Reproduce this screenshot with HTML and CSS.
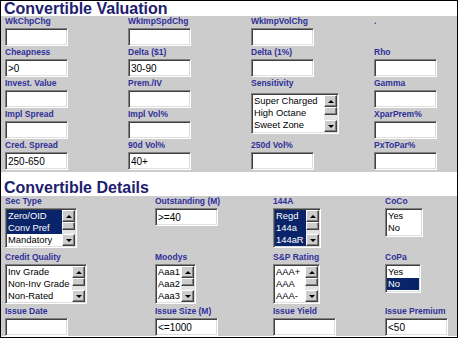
FILE: index.html
```html
<!DOCTYPE html>
<html lang="en">
<head>
  <meta charset="UTF-8">
  <title>Convertible Screen</title>
  <link rel="stylesheet" href="styles.css">
</head>
<body>
  <div class="frame">
    <h2 class="section-title top">Convertible Valuation</h2>
    <div class="panel val">
      <div class="cell"><span class="lbl">WkChpChg</span><input class="field" type="text" value=""></div>
      <div class="cell"><span class="lbl">WkImpSpdChg</span><input class="field" type="text" value=""></div>
      <div class="cell"><span class="lbl">WkImpVolChg</span><input class="field" type="text" value=""></div>
      <div class="cell"><span class="lbl">.</span></div>

      <div class="cell"><span class="lbl">Cheapness</span><input class="field" type="text" value="&gt;0"></div>
      <div class="cell"><span class="lbl">Delta ($1)</span><input class="field" type="text" value="30-90"></div>
      <div class="cell"><span class="lbl">Delta (1%)</span><input class="field" type="text" value=""></div>
      <div class="cell"><span class="lbl">Rho</span><input class="field" type="text" value=""></div>

      <div class="cell"><span class="lbl">Invest. Value</span><input class="field" type="text" value=""></div>
      <div class="cell"><span class="lbl">Prem./IV</span><input class="field" type="text" value=""></div>
      <div class="cell span2">
        <span class="lbl">Sensitivity</span>
        <div class="listbox sens">
          <div class="opts">
            <div class="opt">Super Charged</div>
            <div class="opt">High Octane</div>
            <div class="opt">Sweet Zone</div>
          </div>
          <div class="scroll"><div class="sb-btn up"></div><div class="sb-btn thumb"></div><div class="track"></div><div class="sb-btn down"></div></div>
        </div>
      </div>
      <div class="cell"><span class="lbl">Gamma</span><input class="field" type="text" value=""></div>

      <div class="cell"><span class="lbl">Impl Spread</span><input class="field" type="text" value=""></div>
      <div class="cell"><span class="lbl">Impl Vol%</span><input class="field" type="text" value=""></div>
      <div class="cell"><span class="lbl">XparPrem%</span><input class="field" type="text" value=""></div>

      <div class="cell"><span class="lbl">Cred. Spread</span><input class="field" type="text" value="250-650"></div>
      <div class="cell"><span class="lbl">90d Vol%</span><input class="field" type="text" value="40+"></div>
      <div class="cell"><span class="lbl">250d Vol%</span><input class="field" type="text" value=""></div>
      <div class="cell"><span class="lbl">PxToPar%</span><input class="field" type="text" value=""></div>
    </div>

    <h2 class="section-title second">Convertible Details</h2>
    <div class="panel det">
      <div class="cell">
        <span class="lbl">Sec Type</span>
        <div class="listbox sectype">
          <div class="opts">
            <div class="opt sel">Zero/OID</div>
            <div class="opt sel">Conv Pref</div>
            <div class="opt">Mandatory</div>
          </div>
          <div class="scroll"><div class="sb-btn up"></div><div class="sb-btn thumb"></div><div class="track"></div><div class="sb-btn down"></div></div>
        </div>
      </div>
      <div class="cell"><span class="lbl">Outstanding (M)</span><input class="field" type="text" value="&gt;=40"></div>
      <div class="cell">
        <span class="lbl">144A</span>
        <div class="listbox rule144">
          <div class="opts">
            <div class="opt sel">Regd</div>
            <div class="opt sel">144a</div>
            <div class="opt sel">144aR</div>
          </div>
          <div class="scroll"><div class="sb-btn up"></div><div class="sb-btn thumb"></div><div class="track"></div><div class="sb-btn down"></div></div>
        </div>
      </div>
      <div class="cell">
        <span class="lbl">CoCo</span>
        <div class="listbox short coco">
          <div class="opts">
            <div class="opt">Yes</div>
            <div class="opt">No</div>
          </div>
        </div>
      </div>

      <div class="cell">
        <span class="lbl">Credit Quality</span>
        <div class="listbox credit">
          <div class="opts">
            <div class="opt">Inv Grade</div>
            <div class="opt">Non-Inv Grade</div>
            <div class="opt">Non-Rated</div>
          </div>
          <div class="scroll"><div class="sb-btn up"></div><div class="sb-btn thumb"></div><div class="track"></div><div class="sb-btn down"></div></div>
        </div>
      </div>
      <div class="cell">
        <span class="lbl">Moodys</span>
        <div class="listbox moodys">
          <div class="opts">
            <div class="opt">Aaa1</div>
            <div class="opt">Aaa2</div>
            <div class="opt">Aaa3</div>
          </div>
          <div class="scroll"><div class="sb-btn up"></div><div class="sb-btn thumb"></div><div class="track"></div><div class="sb-btn down"></div></div>
        </div>
      </div>
      <div class="cell">
        <span class="lbl">S&amp;P Rating</span>
        <div class="listbox sp">
          <div class="opts">
            <div class="opt">AAA+</div>
            <div class="opt">AAA</div>
            <div class="opt">AAA-</div>
          </div>
          <div class="scroll"><div class="sb-btn up"></div><div class="sb-btn thumb"></div><div class="track"></div><div class="sb-btn down"></div></div>
        </div>
      </div>
      <div class="cell">
        <span class="lbl">CoPa</span>
        <div class="listbox short copa">
          <div class="opts">
            <div class="opt">Yes</div>
            <div class="opt sel">No</div>
          </div>
        </div>
      </div>

      <div class="cell"><span class="lbl">Issue Date</span><input class="field" type="text" value=""></div>
      <div class="cell"><span class="lbl">Issue Size (M)</span><input class="field" type="text" value="&lt;=1000"></div>
      <div class="cell"><span class="lbl">Issue Yield</span><input class="field" type="text" value=""></div>
      <div class="cell"><span class="lbl">Issue Premium</span><input class="field" type="text" value="&lt;50"></div>
    </div>
  </div>
</body>
</html>
```

FILE: styles.css
```css
body {
  margin: 0;
  background: #fff;
  font-family: "Liberation Sans", Arial, sans-serif;
}

.frame {
  width: 458px;
  height: 338px;
  box-sizing: border-box;
  border: 1px solid #000;
  background: #fff;
  overflow: hidden;
}

.section-title {
  margin: 0;
  padding-left: 3px;
  font-size: 16px;
  line-height: 15px;
  font-weight: bold;
  color: #20206e;
}

.section-title.top {
  height: 15px;
}

.section-title.second {
  padding-top: 8px;
  padding-bottom: 1px;
}

.panel {
  background: #cccccc;
  padding-left: 4px;
  display: grid;
}

.val {
  grid-template-columns: 123px 123px 123px 1fr;
  grid-auto-rows: 31px;
  height: 156px;
  box-sizing: border-box;
}

.det {
  grid-template-columns: 150px 118px 112px 1fr;
  grid-template-rows: 56px 54px 30px;
}

.span2 {
  grid-row: span 2;
}

.lbl {
  display: block;
  height: 10px;
  line-height: 10px;
  margin-bottom: 2px;
  font-size: 8.5px;
  font-weight: bold;
  color: #30309a;
  white-space: nowrap;
}

.field {
  display: block;
  width: 63px;
  height: 18px;
  margin: 0;
  padding: 0 0 0 2px;
  box-sizing: border-box;
  background: #fff;
  border-top: 1px solid #808080;
  border-left: 1px solid #808080;
  border-right: 1px solid #fff;
  border-bottom: 1px solid #fff;
  box-shadow: inset 1px 1px 0 #404040, inset -1px -1px 0 #dedede;
  font-family: "Liberation Sans", Arial, sans-serif;
  font-size: 10px;
  color: #000;
  outline: none;
}

.listbox {
  display: flex;
  height: 40px;
  box-sizing: border-box;
  background: #fff;
  border-top: 1px solid #808080;
  border-left: 1px solid #808080;
  border-right: 1px solid #fff;
  border-bottom: 1px solid #fff;
  padding: 1px;
  box-shadow: inset 1px 1px 0 #404040, inset -1px -1px 0 #dedede;
}

.listbox.short {
  height: 29px;
}

.sens { width: 88px; height: 41px; margin-top: 5px; }
.sectype { width: 72px; }
.rule144 { width: 48px; }
.coco { width: 38px; }
.credit { width: 82px; }
.moodys { width: 41px; }
.sp { width: 47px; }
.copa { width: 36px; }

.opts {
  flex: 1;
  min-width: 0;
  overflow: hidden;
  font-size: 9.4px;
  line-height: 12px;
  color: #000;
}

.opt {
  padding-left: 1px;
  white-space: nowrap;
}

.opt.sel {
  background: #0a246a;
  color: #fff;
}

.scroll {
  width: 13px;
  flex-shrink: 0;
  display: flex;
  flex-direction: column;
  background: #e4e4e4;
}

.sb-btn {
  height: 12px;
  box-sizing: border-box;
  background: #cccccc;
  border-top: 1px solid #fff;
  border-left: 1px solid #fff;
  border-right: 1px solid #404040;
  border-bottom: 1px solid #404040;
  box-shadow: inset -1px -1px 0 #808080;
  display: flex;
  align-items: center;
  justify-content: center;
}

.sb-btn.thumb {
  height: 8px;
}

.track {
  flex: 1;
}

.up::after,
.down::after {
  content: "";
  width: 0;
  height: 0;
  border-left: 3px solid transparent;
  border-right: 3px solid transparent;
}

.up::after {
  border-bottom: 3px solid #000;
}

.down::after {
  border-top: 3px solid #000;
}
```
